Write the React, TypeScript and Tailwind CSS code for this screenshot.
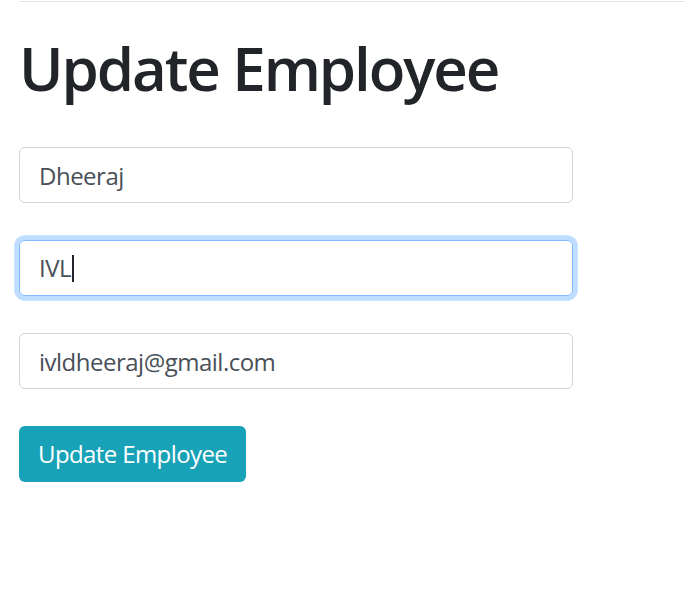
import React from 'react';

const font = { fontFamily: '"Open Sans", "Noto Sans", "Liberation Sans", sans-serif' };

function Field({ value, focused }: { value: string; focused?: boolean }) {
  if (focused) {
    return (
      <div className="flex h-[56px] w-[554px] items-center rounded-[6px] border border-[#80bdff] px-[19px] text-[24px] tracking-[-0.5px] text-[#495057] shadow-[0_0_0_4.8px_rgba(0,123,255,0.25)]">
        <span>{value}</span>
        <span className="ml-[1px] h-[27px] w-[1.5px] bg-[#212529]" />
      </div>
    );
  }
  return (
    <input
      readOnly
      value={value}
      className="h-[56px] w-[554px] rounded-[6px] border border-[#ced4da] px-[19px] text-[24px] tracking-[-0.5px] text-[#495057] outline-none"
      style={font}
    />
  );
}

export default function App() {
  return (
    <div className="min-h-[592px] bg-white" style={font}>
      <div className="pl-[19px] pt-[1px]">
        <hr className="border-t border-[rgba(0,0,0,0.1)]" />
        <h1 className="mt-[30px] text-[60px] font-semibold leading-[1.2] tracking-[-2.1px] text-[#212529]">
          Update Employee
        </h1>
        <form className="mt-[43px] flex flex-col gap-[37px]">
          <Field value="Dheeraj" />
          <Field value="IVL" focused />
          <Field value="ivldheeraj@gmail.com" />
          <div>
            <button
              type="button"
              className="h-[56px] rounded-[6px] bg-[#17a2b8] px-[19px] text-[24px] tracking-[-0.6px] text-white"
            >
              Update Employee
            </button>
          </div>
        </form>
      </div>
    </div>
  );
}
